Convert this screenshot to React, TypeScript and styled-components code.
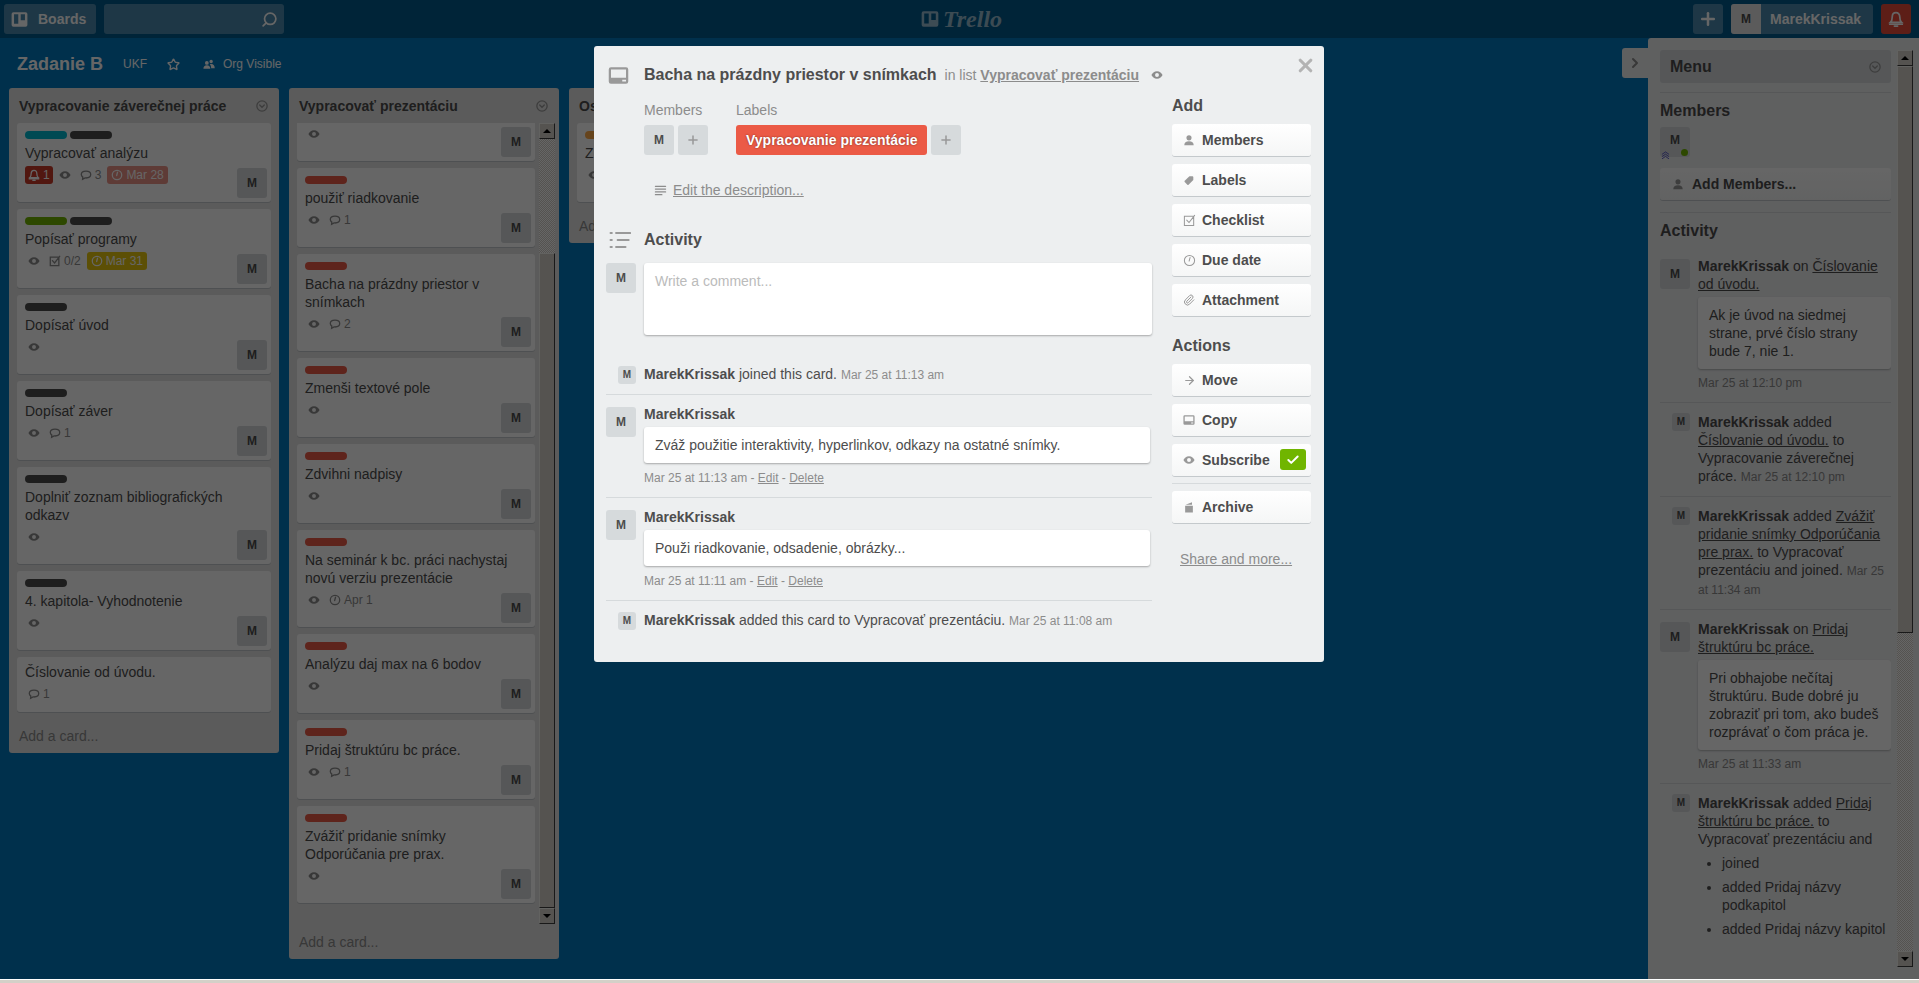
import styled, { createGlobalStyle } from "styled-components";
import { ArrowRight, Check, ChevronRight, Paperclip, Plus, Search, Star, X } from "lucide-react";

import type { FC, ReactNode } from "react";

const GlobalStyle = createGlobalStyle`
  html, body {
    margin: 0;
    padding: 0;
    overflow: hidden;
    background: #d4d0c8;
  }
  body {
    font-family: "Liberation Sans", Arial, sans-serif;
    font-size: 14px;
    line-height: 18px;
    color: #4d4d4d;
  }
  * {
    box-sizing: border-box;
  }
`;

const fills: Record<string, string> = {
  eye: "M7 2.5C3.8 2.5 1.4 5 .5 7c.9 2 3.3 4.5 6.5 4.5S12.6 9 13.5 7C12.6 5 10.2 2.5 7 2.5Z M7 4.7a2.3 2.3 0 1 1 0 4.6a2.3 2.3 0 0 1 0-4.6Z",
  member: "M7 1.5a3 3 0 1 1 0 6a3 3 0 0 1 0-6Z M1.5 13c0-3 2-4.5 5.5-4.5s5.5 1.5 5.5 4.5Z",
  label: "M7.5 2.5h3.5a1 1 0 0 1 1 1V7l-5.5 5.5a1 1 0 0 1-1.4 0L2 9.4a1 1 0 0 1 0-1.4Z",
  card: "M2 1.5h10a1.5 1.5 0 0 1 1.5 1.5v8a1.5 1.5 0 0 1-1.5 1.5H2A1.5 1.5 0 0 1 .5 11V3A1.5 1.5 0 0 1 2 1.5Z M2 3v5.5h10V3Z M9.5 9.8v1.2H12V9.8Z",
  archive: "M2.5 5.5h9v8h-9Z M3 4.5l7.5-3v3Z",
  org: "M4.5 3.5a2.2 2.2 0 1 1 0 4.4a2.2 2.2 0 0 1 0-4.4Z M9.5 2a2 2 0 1 1 0 4a2 2 0 0 1 0-4Z M0.5 12.5c0-2.5 1.5-4 4-4s4 1.5 4 4Z M9.5 12h4.2c0-3-1.300-5-4.200-5c-.7 0-1.100.1-1.500.3C9 8.500 9.500 10 9.500 12Z",
  board: "M2 1h10a1.500 1.500 0 0 1 1.500 1.500v9A1.500 1.500 0 0 1 12 13H2A1.500 1.500 0 0 1 .5 11.500v-9A1.500 1.500 0 0 1 2 1Z M2.500 2.700v7.800h3.500V2.700Z M8 2.700v5h3.500v-5Z",
};

const strokes: Record<string, string> = {
  comment: "M7 2.500c-3 0-5.500 1.600-5.500 4 0 1.300.7 2.300 1.800 3L3 12l2.900-1.600c.4 0 .7.1 1.100.1 3 0 5.500-1.600 5.500-4s-2.500-4-5.500-4Z",
  clock: "M7 1.500a5.500 5.500 0 1 1 0 11a5.500 5.500 0 0 1 0-11Z M7.600 3.800 6.600 7.600",
  checkbox: "M1.500 2.500h10v10h-10Z M4 6.500 6.500 9.200 12.500 1.500",
  bell: "M7 1.500c-2 0-3.300 1.500-3.300 3.800 0 2.400-.6 3.800-1.600 4.700h9.800c-1-.9-1.600-2.300-1.600-4.700C10.300 3 9 1.500 7 1.500Z M1.500 11.600h11 M5.600 13.200h2.800",
  description: "M1.500 2.500h11 M1.500 5.500h11 M1.500 8.500h11 M1.500 11.500h7",
  activity: "M1 2.500h.8 M4.500 2.500h9 M1 7h.8 M5.500 7h7 M1 11.500h.8 M4.500 11.500h6",
  menu: "M7 1a6 6 0 1 1 0 12a6 6 0 0 1 0-12Z M4.300 5.800 7 8.500l2.700-2.700",
  chevrons: "M2 6.500 7 3l5 3.500 M2 10 7 6.500l5 3.500 M2 13.500 7 10l5 3.500",
};

const Glyph: FC<{ name: string; size?: number; weight?: number }> = ({ name, size = 12, weight = 1.5 }) => (
  <svg width={size} height={size} viewBox="0 0 14 14" style={{ flex: "none" }}>
    {fills[name] && <path d={fills[name]} fill="currentColor" fillRule="evenodd" />}
    {strokes[name] && <path d={strokes[name]} fill="none" stroke="currentColor" strokeWidth={weight} strokeLinecap="round" />}
  </svg>
);

type CardData = {
  title: string;
  labels?: string[];
  watch?: boolean;
  alert?: string;
  comments?: string;
  checklist?: string;
  due?: { text: string; tone: "overdue" | "soon" | "plain" };
  member?: boolean;
};

const RED = "#eb5a46";
const BLACK = "#4d4d4d";

const firstList: CardData[] = [
  { title: "Vypracovať analýzu", labels: ["#00b8d0", BLACK], alert: "1", watch: true, comments: "3", due: { text: "Mar 28", tone: "overdue" }, member: true },
  { title: "Popísať programy", labels: ["#70b500", BLACK], watch: true, checklist: "0/2", due: { text: "Mar 31", tone: "soon" }, member: true },
  { title: "Dopísať úvod", labels: [BLACK], watch: true, member: true },
  { title: "Dopísať záver", labels: [BLACK], watch: true, comments: "1", member: true },
  { title: "Doplniť zoznam bibliografických odkazv", labels: [BLACK], watch: true, member: true },
  { title: "4. kapitola- Vyhodnotenie", labels: [BLACK], watch: true, member: true },
  { title: "Číslovanie od úvodu.", comments: "1" },
];

const secondList: CardData[] = [
  { title: "použiť riadkovanie", labels: [RED], watch: true, comments: "1", member: true },
  { title: "Bacha na prázdny priestor v snímkach", labels: [RED], watch: true, comments: "2", member: true },
  { title: "Zmenši textové pole", labels: [RED], watch: true, member: true },
  { title: "Zdvihni nadpisy", labels: [RED], watch: true, member: true },
  { title: "Na seminár k bc. práci nachystaj novú verziu prezentácie", labels: [RED], watch: true, due: { text: "Apr 1", tone: "plain" }, member: true },
  { title: "Analýzu daj max na 6 bodov", labels: [RED], watch: true, member: true },
  { title: "Pridaj štruktúru bc práce.", labels: [RED], watch: true, comments: "1", member: true },
  { title: "Zvážiť pridanie snímky Odporúčania pre prax.", labels: [RED], watch: true, member: true },
];

const BoardCard: FC<CardData & { $clipped?: boolean }> = ({ title, labels, watch, alert, comments, checklist, due, member, $clipped }) => (
  <CardBox $member={member} $clipped={$clipped}>
    {labels && (
      <LabelRow>
        {labels.map((color, i) => (
          <CardLabel key={i} $color={color} />
        ))}
      </LabelRow>
    )}
    <CardTitle>{title}</CardTitle>
    <BadgeRow>
      {alert && (
        <AlertBadge>
          <Glyph name="bell" />
          {alert}
        </AlertBadge>
      )}
      {watch && (
        <Badge>
          <Glyph name="eye" />
        </Badge>
      )}
      {comments && (
        <Badge>
          <Glyph name="comment" />
          {comments}
        </Badge>
      )}
      {checklist && (
        <Badge>
          <Glyph name="checkbox" />
          {checklist}
        </Badge>
      )}
      {due && (
        <DueBadge $tone={due.tone}>
          <Glyph name="clock" />
          {due.text}
        </DueBadge>
      )}
    </BadgeRow>
    {member && <CardAvatar>M</CardAvatar>}
  </CardBox>
);

const Scrollbar: FC<{ before: number; thumb: number }> = ({ before, thumb }) => (
  <ScrollRail>
    <ScrollButton>
      <ArrowUp />
    </ScrollButton>
    {before > 0 && <ScrollGap $size={before} />}
    <ScrollThumb $size={thumb} />
    <ScrollFill />
    <ScrollButton>
      <ArrowDown />
    </ScrollButton>
  </ScrollRail>
);

const SideButton: FC<{ icon: ReactNode; children: ReactNode }> = ({ icon, children }) => (
  <ActionButton>
    <ActionIcon>{icon}</ActionIcon>
    {children}
  </ActionButton>
);

const App: FC = () => {
  return (
    <>
      <GlobalStyle />
      <Page>
        <TopBar>
          <TopGroup>
            <BarButton>
              <Glyph name="board" size={17} />
              Boards
            </BarButton>
            <SearchBox>
              <Search size={17} strokeWidth={2.4} style={{ transform: "scaleX(-1)" }} />
            </SearchBox>
          </TopGroup>
          <Logo>
            <Glyph name="board" size={18} />
            <LogoWord>Trello</LogoWord>
          </Logo>
          <TopGroup>
            <SquareButton>
              <Plus size={20} strokeWidth={3} />
            </SquareButton>
            <UserButton>
              <UserAvatar>M</UserAvatar>
              MarekKrissak
            </UserButton>
            <BellButton>
              <Glyph name="bell" size={16} />
            </BellButton>
          </TopGroup>
        </TopBar>

        <Workspace>
          <Board>
            <BoardHead>
              <BoardName>Zadanie B</BoardName>
              <BoardMeta>UKF</BoardMeta>
              <Star size={13} strokeWidth={2.6} />
              <OrgInfo>
                <Glyph name="org" size={12} />
                Org Visible
              </OrgInfo>
            </BoardHead>
            <Lists>
              <List>
                <ListHead>
                  Vypracovanie záverečnej práce
                  <Glyph name="menu" />
                </ListHead>
                <ListCards>
                  {firstList.map((card) => (
                    <BoardCard key={card.title} {...card} />
                  ))}
                </ListCards>
                <AddCard>Add a card...</AddCard>
              </List>
              <List>
                <ListHead>
                  Vypracovať prezentáciu
                  <Glyph name="menu" />
                </ListHead>
                <ScrollArea>
                  <ScrollCards>
                    <BoardCard title="nedávať čiarky medzi body" watch member $clipped />
                    {secondList.map((card) => (
                      <BoardCard key={card.title} {...card} />
                    ))}
                  </ScrollCards>
                  <Scrollbar before={114} thumb={655} />
                </ScrollArea>
                <AddCard>Add a card...</AddCard>
              </List>
              <List>
                <ListHead>Os</ListHead>
                <ListCards>
                  <BoardCard title="Z" labels={["#ffab4a"]} watch member />
                </ListCards>
                <AddCard>Add a card...</AddCard>
              </List>
            </Lists>
          </Board>

          <MenuPanel>
            <MenuTab>
              <ChevronRight size={16} strokeWidth={3} />
            </MenuTab>
            <MenuContent>
              <MenuHead>
                Menu
                <Glyph name="menu" />
              </MenuHead>
              <MenuRule />
              <MenuTitle>Members</MenuTitle>
              <MenuMember>
                M
                <AdminMark>
                  <Glyph name="chevrons" size={9} weight={1.2} />
                </AdminMark>
                <OnlineDot />
              </MenuMember>
              <AddMembers>
                <Glyph name="member" size={12} />
                Add Members...
              </AddMembers>
              <MenuRule />
              <ActivityTitle>Activity</ActivityTitle>

              <FeedItem>
                <FeedAvatar>M</FeedAvatar>
                <FeedBody>
                  <b>MarekKrissak</b> on <u>Číslovanie od úvodu.</u>
                  <FeedQuote>Ak je úvod na siedmej strane, prvé číslo strany bude 7, nie 1.</FeedQuote>
                  <FeedDate>Mar 25 at 12:10 pm</FeedDate>
                </FeedBody>
              </FeedItem>
              <FeedItem>
                <FeedAvatar $small>M</FeedAvatar>
                <FeedBody>
                  <b>MarekKrissak</b> added <u>Číslovanie od úvodu.</u> to Vypracovanie záverečnej práce. <FeedStamp>Mar 25 at 12:10 pm</FeedStamp>
                </FeedBody>
              </FeedItem>
              <FeedItem>
                <FeedAvatar $small>M</FeedAvatar>
                <FeedBody>
                  <b>MarekKrissak</b> added <u>Zvážiť pridanie snímky Odporúčania pre prax.</u> to Vypracovať prezentáciu and joined. <FeedStamp>Mar 25 at 11:34 am</FeedStamp>
                </FeedBody>
              </FeedItem>
              <FeedItem>
                <FeedAvatar>M</FeedAvatar>
                <FeedBody>
                  <b>MarekKrissak</b> on <u>Pridaj štruktúru bc práce.</u>
                  <FeedQuote>Pri obhajobe nečítaj štruktúru. Bude dobré ju zobraziť pri tom, ako budeš rozprávať o čom práca je.</FeedQuote>
                  <FeedDate>Mar 25 at 11:33 am</FeedDate>
                </FeedBody>
              </FeedItem>
              <FeedItem>
                <FeedAvatar $small>M</FeedAvatar>
                <FeedBody>
                  <b>MarekKrissak</b> added <u>Pridaj štruktúru bc práce.</u> to Vypracovať prezentáciu and
                  <FeedList>
                    <li>joined</li>
                    <li>added Pridaj názvy podkapitol</li>
                    <li>added Pridaj názvy kapitol</li>
                  </FeedList>
                </FeedBody>
              </FeedItem>
            </MenuContent>
            <Scrollbar before={0} thumb={567} />
          </MenuPanel>
        </Workspace>

        <Dim />

        <Modal>
          <CloseButton>
            <X size={21} strokeWidth={3.6} />
          </CloseButton>
          <ModalHead>
            <TitleIcon>
              <Glyph name="card" size={21} />
            </TitleIcon>
            <ModalTitle>Bacha na prázdny priestor v snímkach</ModalTitle>
            <InList>
              in list <b>Vypracovať prezentáciu</b>
            </InList>
            <WatchMark>
              <Glyph name="eye" size={12} />
            </WatchMark>
          </ModalHead>
          <ModalColumns>
            <ModalMain>
              <FieldRow>
                <div>
                  <FieldLabel>Members</FieldLabel>
                  <FieldItems>
                    <Tile>M</Tile>
                    <PlusTile>
                      <Plus size={14} strokeWidth={2.6} />
                    </PlusTile>
                  </FieldItems>
                </div>
                <div>
                  <FieldLabel>Labels</FieldLabel>
                  <FieldItems>
                    <RedTag>Vypracovanie prezentácie</RedTag>
                    <PlusTile>
                      <Plus size={14} strokeWidth={2.6} />
                    </PlusTile>
                  </FieldItems>
                </div>
              </FieldRow>
              <EditDescription>
                <Glyph name="description" size={13} weight={1.300} />
                <u>Edit the description...</u>
              </EditDescription>
              <ActivityHead>
                <ActivityIcon>
                  <Glyph name="activity" size={22} weight={1.300} />
                </ActivityIcon>
                Activity
              </ActivityHead>
              <CommentRow>
                <Tile>M</Tile>
                <CommentInput>Write a comment...</CommentInput>
              </CommentRow>

              <LogLine $top={30}>
                <SmallTile>M</SmallTile>
                <span>
                  <b>MarekKrissak</b> joined this card. <LogDate>Mar 25 at 11:13 am</LogDate>
                </span>
              </LogLine>
              <CommentEntry>
                <Tile>M</Tile>
                <CommentBody>
                  <b>MarekKrissak</b>
                  <CommentBubble>Zváž použitie interaktivity, hyperlinkov, odkazy na ostatné snímky.</CommentBubble>
                  <CommentMeta>
                    Mar 25 at 11:13 am - <u>Edit</u> - <u>Delete</u>
                  </CommentMeta>
                </CommentBody>
              </CommentEntry>
              <CommentEntry>
                <Tile>M</Tile>
                <CommentBody>
                  <b>MarekKrissak</b>
                  <CommentBubble>Použi riadkovanie, odsadenie, obrázky...</CommentBubble>
                  <CommentMeta>
                    Mar 25 at 11:11 am - <u>Edit</u> - <u>Delete</u>
                  </CommentMeta>
                </CommentBody>
              </CommentEntry>
              <LogLine $top={10} $last>
                <SmallTile>M</SmallTile>
                <span>
                  <b>MarekKrissak</b> added this card to Vypracovať prezentáciu. <LogDate>Mar 25 at 11:08 am</LogDate>
                </span>
              </LogLine>
            </ModalMain>

            <ModalSide>
              <SideTitle>Add</SideTitle>
              <SideButton icon={<Glyph name="member" />}>Members</SideButton>
              <SideButton icon={<Glyph name="label" />}>Labels</SideButton>
              <SideButton icon={<Glyph name="checkbox" size={13} weight={1.100} />}>Checklist</SideButton>
              <SideButton icon={<Glyph name="clock" size={13} weight={1.100} />}>Due date</SideButton>
              <SideButton icon={<Paperclip size={12} strokeWidth={2} />}>Attachment</SideButton>
              <SideTitle $gap>Actions</SideTitle>
              <SideButton icon={<ArrowRight size={13} strokeWidth={2.200} />}>Move</SideButton>
              <SideButton icon={<Glyph name="card" />}>Copy</SideButton>
              <SideButton icon={<Glyph name="eye" />}>
                Subscribe
                <CheckMark>
                  <Check size={14} strokeWidth={3.400} />
                </CheckMark>
              </SideButton>
              <SideRule />
              <SideButton icon={<Glyph name="archive" />}>Archive</SideButton>
              <ShareLink>Share and more...</ShareLink>
            </ModalSide>
          </ModalColumns>
        </Modal>
      </Page>
      <BottomStrip />
    </>
  );
};

export default App;

const Page = styled.div`
  position: relative;
  display: flex;
  flex-direction: column;
  height: 979px;
  overflow: hidden;
  background: #0079bf;
`;

const TopBar = styled.header`
  display: flex;
  flex: none;
  align-items: center;
  justify-content: space-between;
  height: 38px;
  padding: 0 8px 0 4px;
  background: #005a8c;
`;

const TopGroup = styled.div`
  display: flex;
  gap: 8px;
`;

const BarButton = styled.div`
  display: flex;
  align-items: center;
  gap: 10px;
  width: 92px;
  height: 30px;
  padding-left: 7px;
  border-radius: 3px;
  background: rgba(255, 255, 255, 0.3);
  color: #fff;
  font-weight: bold;
`;

const SearchBox = styled.div`
  display: flex;
  align-items: center;
  justify-content: flex-end;
  width: 180px;
  height: 30px;
  padding-right: 6px;
  border-radius: 3px;
  background: rgba(255, 255, 255, 0.3);
  color: #fff;
`;

const Logo = styled.div`
  position: absolute;
  top: 8px;
  left: 921px;
  display: flex;
  align-items: center;
  gap: 4px;
  color: rgba(255, 255, 255, 0.6);
`;

const LogoWord = styled.span`
  font-family: "Liberation Serif", serif;
  font-size: 24px;
  font-style: italic;
  font-weight: bold;
  line-height: 22px;
`;

const SquareButton = styled.div`
  display: flex;
  align-items: center;
  justify-content: center;
  width: 30px;
  height: 30px;
  border-radius: 3px;
  background: rgba(255, 255, 255, 0.3);
  color: #fff;
`;

const UserButton = styled.div`
  display: flex;
  align-items: center;
  gap: 9px;
  width: 142px;
  height: 30px;
  border-radius: 3px;
  background: rgba(255, 255, 255, 0.3);
  color: #fff;
  font-weight: bold;
`;

const UserAvatar = styled.span`
  display: flex;
  align-items: center;
  justify-content: center;
  width: 30px;
  height: 30px;
  border-radius: 3px 0 0 3px;
  background: #e3e3e3;
  color: #4d4d4d;
  font-size: 12px;
`;

const BellButton = styled(SquareButton)`
  background: #e84c3a;
`;

const Workspace = styled.div`
  display: flex;
  flex: 1;
  min-height: 0;
`;

const Board = styled.main`
  flex: 1;
  min-width: 0;
`;

const BoardHead = styled.div`
  display: flex;
  align-items: center;
  height: 50px;
  padding: 2px 0 0 17px;
  color: #fff;
  font-size: 12px;
`;

const BoardName = styled.h1`
  margin: 0 20px 0 0;
  font-size: 18px;
  line-height: 22px;
`;

const BoardMeta = styled.span`
  margin-right: 20px;
`;

const OrgInfo = styled.span`
  display: flex;
  align-items: center;
  gap: 8px;
  margin-left: 23px;
`;

const Lists = styled.div`
  display: flex;
  align-items: flex-start;
  gap: 10px;
  padding-left: 9px;
`;

const List = styled.section`
  flex: none;
  width: 270px;
  border-radius: 3px;
  background: #e3e3e3;
`;

const ListHead = styled.div`
  display: flex;
  align-items: center;
  justify-content: space-between;
  height: 35px;
  padding: 0 11px 0 10px;
  color: #4d4d4d;
  font-weight: bold;

  svg {
    color: #999;
  }
`;

const ListCards = styled.div`
  padding: 0 8px;
`;

const ScrollArea = styled.div`
  display: flex;
  justify-content: space-between;
  height: 802px;
  padding: 0 4px 1px 8px;
  overflow: hidden;
`;

const ScrollCards = styled.div`
  width: 238px;
  height: 802px;
  overflow: hidden;
`;

const CardBox = styled.article<{ $member?: boolean; $clipped?: boolean }>`
  position: relative;
  margin-top: ${({ $clipped }) => ($clipped ? "-26px" : "0")};
  margin-bottom: 7px;
  padding: 6px 8px ${({ $member }) => ($member ? "18px" : "9px")};
  border-radius: 3px;
  background: #fff;
  box-shadow: 0 1px 0 #c4c9cc;
`;

const LabelRow = styled.div`
  display: flex;
  gap: 3px;
  margin: 2px 0 5px;
`;

const CardLabel = styled.span<{ $color: string }>`
  width: 42px;
  height: 8px;
  border-radius: 4px;
  background: ${({ $color }) => $color};
`;

const CardTitle = styled.div`
  color: #4d4d4d;
`;

const BadgeRow = styled.div`
  display: flex;
  gap: 3px;
  height: 18px;
  margin-top: 4px;
  color: #8c8c8c;
  font-size: 12px;
`;

const Badge = styled.span`
  display: flex;
  align-items: center;
  gap: 3px;
  padding: 0 3px;
`;

const AlertBadge = styled(Badge)`
  border-radius: 3px;
  background: #cb3a28;
  color: #fff;
`;

const DueBadge = styled(Badge)<{ $tone: "overdue" | "soon" | "plain" }>`
  padding: 0 ${({ $tone }) => ($tone === "plain" ? "3px" : "4px")};
  border-radius: 3px;
  background: ${({ $tone }) => ($tone === "overdue" ? "#ec9488" : $tone === "soon" ? "#e6c60d" : "transparent")};
  color: ${({ $tone }) => ($tone === "plain" ? "#8c8c8c" : "#fff")};
`;

const CardAvatar = styled.span`
  position: absolute;
  right: 4px;
  bottom: 4px;
  display: flex;
  align-items: center;
  justify-content: center;
  width: 30px;
  height: 30px;
  border-radius: 3px;
  background: #d6dadc;
  color: #4d4d4d;
  font-size: 12px;
  font-weight: bold;
`;

const AddCard = styled.div`
  height: 34px;
  padding: 8px 10px;
  color: #8c8c8c;
`;

const ScrollRail = styled.div`
  display: flex;
  flex: none;
  flex-direction: column;
  width: 16px;
  height: 801px;
  background: repeating-conic-gradient(#d4d0c8 0 25%, #ffffff 0 50%) 0 0 / 2px 2px;

  aside & {
    height: 917px;
    margin-left: 6px;
  }
`;

const ScrollButton = styled.div`
  display: flex;
  flex: none;
  align-items: center;
  justify-content: center;
  height: 16px;
  border: 1px solid;
  border-color: #f4f4f0 #404040 #404040 #f4f4f0;
  background: #d4d0c8;
`;

const ArrowUp = styled.span`
  width: 0;
  height: 0;
  border: 4px solid transparent;
  border-top: 0;
  border-bottom-color: #000;
`;

const ArrowDown = styled.span`
  width: 0;
  height: 0;
  border: 4px solid transparent;
  border-bottom: 0;
  border-top-color: #000;
`;

const ScrollGap = styled.div<{ $size: number }>`
  flex: none;
  height: ${({ $size }) => $size}px;
`;

const ScrollThumb = styled(ScrollButton)<{ $size: number }>`
  height: ${({ $size }) => $size}px;
`;

const ScrollFill = styled.div`
  flex: 1;
`;

const MenuPanel = styled.aside`
  position: relative;
  display: flex;
  flex: none;
  width: 271px;
  height: 941px;
  padding: 12px 6px 12px 12px;
  border-radius: 3px 0 0 0;
  background: #edeff0;
`;

const MenuTab = styled.div`
  position: absolute;
  top: 10px;
  left: -26px;
  display: flex;
  align-items: center;
  justify-content: center;
  width: 26px;
  height: 30px;
  border-radius: 3px 0 0 3px;
  background: #edeff0;
  color: #8c8c8c;
`;

const MenuContent = styled.div`
  flex: none;
  width: 231px;
  height: 917px;
  overflow: hidden;
  color: #4d4d4d;
`;

const MenuHead = styled.div`
  display: flex;
  align-items: center;
  justify-content: space-between;
  height: 33px;
  padding: 0 10px;
  border-radius: 3px;
  background: #d6dadc;
  font-size: 16px;
  font-weight: bold;

  svg {
    color: #999;
  }
`;

const MenuRule = styled.hr`
  height: 1px;
  margin: 9px 0 0;
  border: 0;
  background: #d6dadc;
`;

const MenuTitle = styled.h3`
  margin: 8px 0 6px;
  font-size: 16px;
  line-height: 20px;
`;

const ActivityTitle = styled(MenuTitle)`
  margin-bottom: 6px;
`;

const MenuMember = styled.div`
  position: relative;
  display: flex;
  align-items: center;
  justify-content: center;
  width: 30px;
  height: 30px;
  padding-bottom: 4px;
  border-radius: 3px;
  background: #d6dadc;
  color: #4d4d4d;
  font-size: 12px;
  font-weight: bold;
`;

const AdminMark = styled.span`
  position: absolute;
  bottom: -2px;
  left: 1px;
  display: flex;
  color: #3a3abf;
`;

const OnlineDot = styled.span`
  position: absolute;
  right: 2px;
  bottom: 1px;
  width: 7px;
  height: 7px;
  border-radius: 50%;
  background: #70b500;
`;

const AddMembers = styled.div`
  display: flex;
  align-items: center;
  gap: 8px;
  height: 32px;
  margin-top: 11px;
  margin-bottom: 12px;
  padding-left: 12px;
  border-radius: 3px;
  background: linear-gradient(#fff, #f5f6f6);
  box-shadow: 0 1px 0 #c4c9cc;
  font-weight: bold;

  svg {
    color: #999;
  }
`;

const FeedItem = styled.div`
  display: flex;
  gap: 8px;
  padding: 10px 0 10px;
  border-bottom: 1px solid #d6dadc;

  &:last-child {
    border-bottom: 0;
  }
`;

const FeedAvatar = styled.span<{ $small?: boolean }>`
  display: flex;
  flex: none;
  align-items: center;
  justify-content: center;
  width: ${({ $small }) => ($small ? "18px" : "30px")};
  height: ${({ $small }) => ($small ? "18px" : "30px")};
  margin-top: ${({ $small }) => ($small ? "0" : "2px")};
  margin-left: ${({ $small }) => ($small ? "12px" : "0")};
  border-radius: 3px;
  background: #d6dadc;
  font-size: ${({ $small }) => ($small ? "10px" : "12px")};
  font-weight: bold;
`;

const FeedBody = styled.div`
  width: 193px;
  color: #4d4d4d;
`;

const FeedQuote = styled.div`
  margin-top: 4px;
  padding: 9px 11px;
  border-radius: 3px;
  background: #fff;
  box-shadow: 0 1px 2px rgba(0, 0, 0, 0.25);
`;

const FeedDate = styled.div`
  margin-top: 5px;
  color: #8c8c8c;
  font-size: 12px;
`;

const FeedStamp = styled.span`
  color: #8c8c8c;
  font-size: 12px;
`;

const FeedList = styled.ul`
  margin: 6px 0 0;
  padding-left: 24px;

  li {
    margin-bottom: 6px;
  }
`;

const Dim = styled.div`
  position: absolute;
  inset: 0;
  background: rgba(0, 0, 0, 0.6);
`;

const Modal = styled.div`
  position: absolute;
  top: 46px;
  left: 594px;
  width: 730px;
  height: 616px;
  border-radius: 3px;
  background: #edeff0;
  color: #4d4d4d;
`;

const CloseButton = styled.div`
  position: absolute;
  top: 9px;
  right: 8px;
  display: flex;
  color: #b3b3b3;
`;

const ModalHead = styled.div`
  display: flex;
  align-items: center;
  height: 50px;
  padding: 18px 0 10px 14px;
`;

const TitleIcon = styled.span`
  display: flex;
  width: 36px;
  color: #999;
`;

const ModalTitle = styled.h2`
  margin: 0;
  font-size: 16px;
  line-height: 22px;
`;

const InList = styled.span`
  margin-left: 8px;
  color: #8c8c8c;

  b {
    text-decoration: underline;
  }
`;

const WatchMark = styled.span`
  display: flex;
  margin-left: 12px;
  color: #8c8c8c;
`;

const ModalColumns = styled.div`
  display: flex;
  gap: 20px;
  padding: 0 13px 0 12px;
`;

const ModalMain = styled.div`
  width: 546px;
`;

const FieldRow = styled.div`
  display: flex;
  gap: 28px;
  padding: 5px 0 0 38px;
`;

const FieldLabel = styled.div`
  margin-bottom: 6px;
  color: #8c8c8c;
`;

const FieldItems = styled.div`
  display: flex;
  gap: 4px;
`;

const Tile = styled.span`
  display: flex;
  flex: none;
  align-items: center;
  justify-content: center;
  width: 30px;
  height: 30px;
  border-radius: 3px;
  background: #d6dadc;
  color: #4d4d4d;
  font-size: 12px;
  font-weight: bold;
`;

const PlusTile = styled(Tile)`
  color: #999;
`;

const RedTag = styled.span`
  display: flex;
  align-items: center;
  height: 30px;
  padding: 0 10px;
  border-radius: 3px;
  background: #eb5a46;
  color: #fff;
  font-weight: bold;
  text-shadow: 0 0 2px rgba(0, 0, 0, 0.5);
`;

const EditDescription = styled.div`
  display: flex;
  align-items: center;
  gap: 6px;
  margin-top: 26px;
  padding-left: 48px;
  color: #8c8c8c;
`;

const ActivityHead = styled.h3`
  display: flex;
  align-items: center;
  height: 20px;
  margin: 31px 0 13px;
  font-size: 16px;
`;

const ActivityIcon = styled.span`
  display: flex;
  width: 38px;
  padding-left: 3px;
  color: #999;
`;

const CommentRow = styled.div`
  display: flex;
  gap: 8px;
`;

const CommentInput = styled.div`
  width: 508px;
  height: 72px;
  padding: 9px 11px;
  border-radius: 3px;
  background: #fff;
  box-shadow: 0 1px 2px rgba(0, 0, 0, 0.3);
  color: #bbb;
`;

const LogLine = styled.div<{ $top: number; $last?: boolean }>`
  display: flex;
  align-items: center;
  gap: 8px;
  margin-top: ${({ $top }) => $top}px;
  padding: 0 0 10px 12px;
  border-bottom: ${({ $last }) => ($last ? "0" : "1px solid #d6dadc")};
`;

const SmallTile = styled(Tile)`
  width: 18px;
  height: 18px;
  font-size: 10px;
`;

const LogDate = styled.span`
  color: #8c8c8c;
  font-size: 12px;
`;

const CommentEntry = styled.div`
  display: flex;
  gap: 8px;
  padding: 10px 0;
  border-bottom: 1px solid #d6dadc;

  ${Tile} {
    margin-top: 2px;
  }
`;

const CommentBody = styled.div`
  width: 506px;
`;

const CommentBubble = styled.div`
  margin: 4px 0 6px;
  padding: 9px 11px;
  border-radius: 3px;
  background: #fff;
  box-shadow: 0 1px 2px rgba(0, 0, 0, 0.3);
`;

const CommentMeta = styled.div`
  color: #8c8c8c;
  font-size: 12px;
`;

const ModalSide = styled.div`
  width: 139px;
`;

const SideTitle = styled.h3<{ $gap?: boolean }>`
  margin: ${({ $gap }) => ($gap ? "20px" : "0")} 0 8px;
  font-size: 16px;
  line-height: 20px;
`;

const ActionButton = styled.div`
  position: relative;
  display: flex;
  align-items: center;
  height: 32px;
  margin-bottom: 8px;
  padding-left: 30px;
  border-radius: 3px;
  background: linear-gradient(#fff, #f5f6f6);
  box-shadow: 0 1px 0 #c4c9cc;
  font-weight: bold;
`;

const ActionIcon = styled.span`
  position: absolute;
  top: 0;
  bottom: 0;
  left: 11px;
  display: flex;
  align-items: center;
  color: #999;
`;

const CheckMark = styled.span`
  position: absolute;
  top: 5px;
  right: 5px;
  display: flex;
  align-items: center;
  justify-content: center;
  width: 26px;
  height: 21px;
  border-radius: 3px;
  background: #70b500;
  color: #fff;
`;

const SideRule = styled.hr`
  height: 1px;
  margin: -1px 0 7px;
  border: 0;
  background: #d6dadc;
`;

const ShareLink = styled.div`
  margin-top: 27px;
  padding-left: 8px;
  color: #8c8c8c;
  text-decoration: underline;
`;

const BottomStrip = styled.div`
  height: 4px;
  border-top: 1px solid #fff;
  background: #d4d0c8;
`;
